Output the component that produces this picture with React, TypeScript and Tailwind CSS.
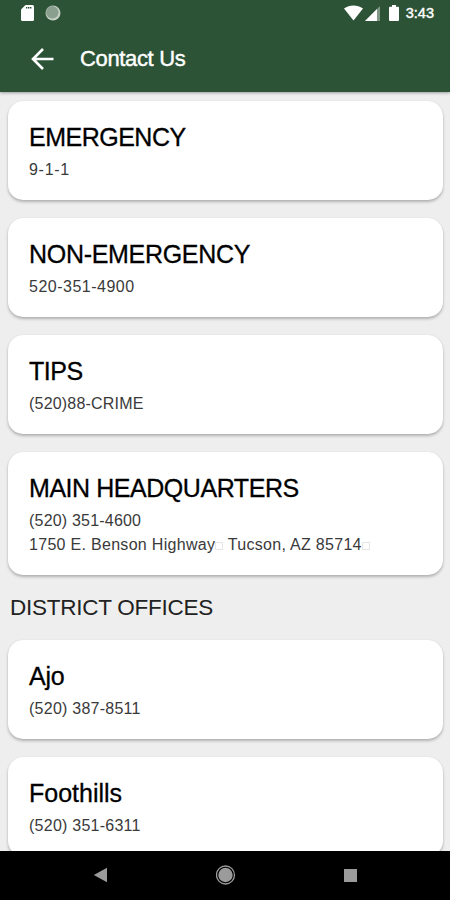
type ContactLine = {
	text: string;
	className: string;
	missingGlyphs?: boolean;
};

type Contact = {
	title: string;
	titleClassName: string;
	lines: ContactLine[];
};

const mainContacts: Contact[] = [
	{
		title: "EMERGENCY",
		titleClassName: "tracking-[-0.5px]",
		lines: [{ text: "9-1-1", className: "tracking-[0.7px]" }],
	},
	{
		title: "NON-EMERGENCY",
		titleClassName: "tracking-[-0.3px]",
		lines: [{ text: "520-351-4900", className: "tracking-[0.5px]" }],
	},
	{
		title: "TIPS",
		titleClassName: "tracking-[-0.5px]",
		lines: [{ text: "(520)88-CRIME", className: "tracking-[0.2px]" }],
	},
	{
		title: "MAIN HEADQUARTERS",
		titleClassName: "tracking-[-0.45px]",
		lines: [
			{ text: "(520) 351-4600", className: "tracking-[0.2px]" },
			{ text: "1750 E. Benson Highway| Tucson, AZ 85714|", className: "tracking-[0.3px]", missingGlyphs: true },
		],
	},
];

const districtOffices: Contact[] = [
	{
		title: "Ajo",
		titleClassName: "tracking-[-0.2px]",
		lines: [{ text: "(520) 387-8511", className: "tracking-[0.25px]" }],
	},
	{
		title: "Foothills",
		titleClassName: "tracking-[0px]",
		lines: [{ text: "(520) 351-6311", className: "tracking-[0.25px]" }],
	},
];

function StatusBar() {
	return (
		<div className="flex h-[26px] items-center justify-between pr-4 pl-[21px] text-white">
			<div className="flex items-center gap-[11px]">
				<svg viewBox="0 0 13 16" className="h-4 w-[13px]" aria-hidden="true">
					<path d="M4.5 0H11.5A1.5 1.5 0 0 1 13 1.5V14.5A1.5 1.5 0 0 1 11.5 16H1.5A1.5 1.5 0 0 1 0 14.5V4.5Z" fill="currentColor" />
					<path d="M5 2.8H11" stroke="#2d5337" strokeWidth="1.6" strokeDasharray="1.4 0.6" />
				</svg>
				<svg viewBox="0 0 16 16" className="size-4" aria-hidden="true">
					<circle cx="8" cy="8" r="7.5" fill="#c3cec4" />
					<circle cx="7.3" cy="7.3" r="6.2" fill="#8b9f8e" />
				</svg>
			</div>
			<div className="flex items-center">
				<svg viewBox="0 0 19 16" className="h-4 w-[19px]" aria-hidden="true">
					<path d="M0 3.4C5.6-.6 13.4-.6 19 3.4L9.5 15.6Z" fill="currentColor" />
				</svg>
				<svg viewBox="0 0 15 15" className="ml-0.5 h-[15px] w-[15px]" aria-hidden="true">
					<path d="M15 0V15H0Z" fill="#7f9785" />
					<path d="M12 3V15H0Z" fill="currentColor" />
				</svg>
				<svg viewBox="0 0 10 16" className="ml-[9px] h-4 w-2.5" aria-hidden="true">
					<path d="M3 0H7V1.7H9A1 1 0 0 1 10 2.7V15A1 1 0 0 1 9 16H1A1 1 0 0 1 0 15V2.7A1 1 0 0 1 1 1.7H3Z" fill="currentColor" />
				</svg>
				<span className="ml-[7px] text-[14.5px] leading-4 [-webkit-text-stroke:0.4px]">3:43</span>
			</div>
		</div>
	);
}

function AppBar() {
	return (
		<div className="flex h-[66px] items-center pl-[31px] text-white">
			<svg viewBox="0 0 23 22" fill="none" className="h-[22px] w-[23px]" aria-hidden="true">
				<path d="M22.5 11H2M12 1L2 11L12 21" stroke="currentColor" strokeWidth="2.6" />
			</svg>
			<h1 className="ml-[26px] text-[22px] leading-7 tracking-[-0.35px] [-webkit-text-stroke:0.4px]">Contact Us</h1>
		</div>
	);
}

// "|" marks a character the font has no glyph for
function MissingGlyphText({ text }: { text: string }) {
	return (
		<>
			{text.split("|").map((part, index, parts) => (
				<span key={index}>
					{part}
					{index < parts.length - 1 && <span className="inline-block size-2 border border-[#e6e6e6]" />}
				</span>
			))}
		</>
	);
}

function ContactCard({ contact }: { contact: Contact }) {
	return (
		<article className="rounded-[15px] bg-white px-[21px] pt-[21px] pb-[18px] shadow-[0_2px_3px_rgba(0,0,0,0.25),0_0_1px_rgba(0,0,0,0.12)]">
			<h2 className={`text-[25px] leading-[30px] text-black [-webkit-text-stroke:0.3px] ${contact.titleClassName}`}>{contact.title}</h2>
			<div className="mt-1.5">
				{contact.lines.map((line) => (
					<p key={line.text} className={`text-[16px] leading-6 whitespace-nowrap text-[#3a3a3a] ${line.className}`}>
						{line.missingGlyphs ? <MissingGlyphText text={line.text} /> : line.text}
					</p>
				))}
			</div>
		</article>
	);
}

function NavigationBar() {
	return (
		<nav className="flex h-[49px] shrink-0 items-center justify-between bg-black pr-[93px] pb-px pl-[93px] text-[#9b9b9b]">
			<svg viewBox="0 0 14 16" className="h-4 w-3.5" aria-hidden="true">
				<path d="M0.8 8L14 0.8V15.2Z" fill="currentColor" />
			</svg>
			<svg viewBox="0 0 20 20" className="size-5" aria-hidden="true">
				<circle cx="9.5" cy="10" r="9" fill="none" stroke="currentColor" strokeWidth="1.3" />
				<circle cx="9.5" cy="10" r="7.2" fill="currentColor" />
			</svg>
			<div className="size-[13px] bg-[#9b9b9b]" />
		</nav>
	);
}

export default function App() {
	return (
		<div className="flex h-[900px] w-[450px] flex-col overflow-hidden bg-[#eeeeee] font-['Liberation_Sans',Arial,sans-serif]">
			<header className="z-10 h-[92px] shrink-0 bg-[#2d5337] shadow-[0_1px_3px_rgba(0,0,0,0.35)]">
				<StatusBar />
				<AppBar />
			</header>
			<main className="min-h-0 flex-1 overflow-hidden pt-[9px] pr-[7px] pl-2">
				<div className="flex flex-col gap-[18px]">
					{mainContacts.map((contact) => (
						<ContactCard key={contact.title} contact={contact} />
					))}
				</div>
				<h2 className="mt-[19px] ml-0.5 text-[22.5px] leading-7 tracking-[-0.25px] text-[#222]">DISTRICT OFFICES</h2>
				<div className="mt-[18px] flex flex-col gap-[18px]">
					{districtOffices.map((contact) => (
						<ContactCard key={contact.title} contact={contact} />
					))}
				</div>
			</main>
			<NavigationBar />
		</div>
	);
}
